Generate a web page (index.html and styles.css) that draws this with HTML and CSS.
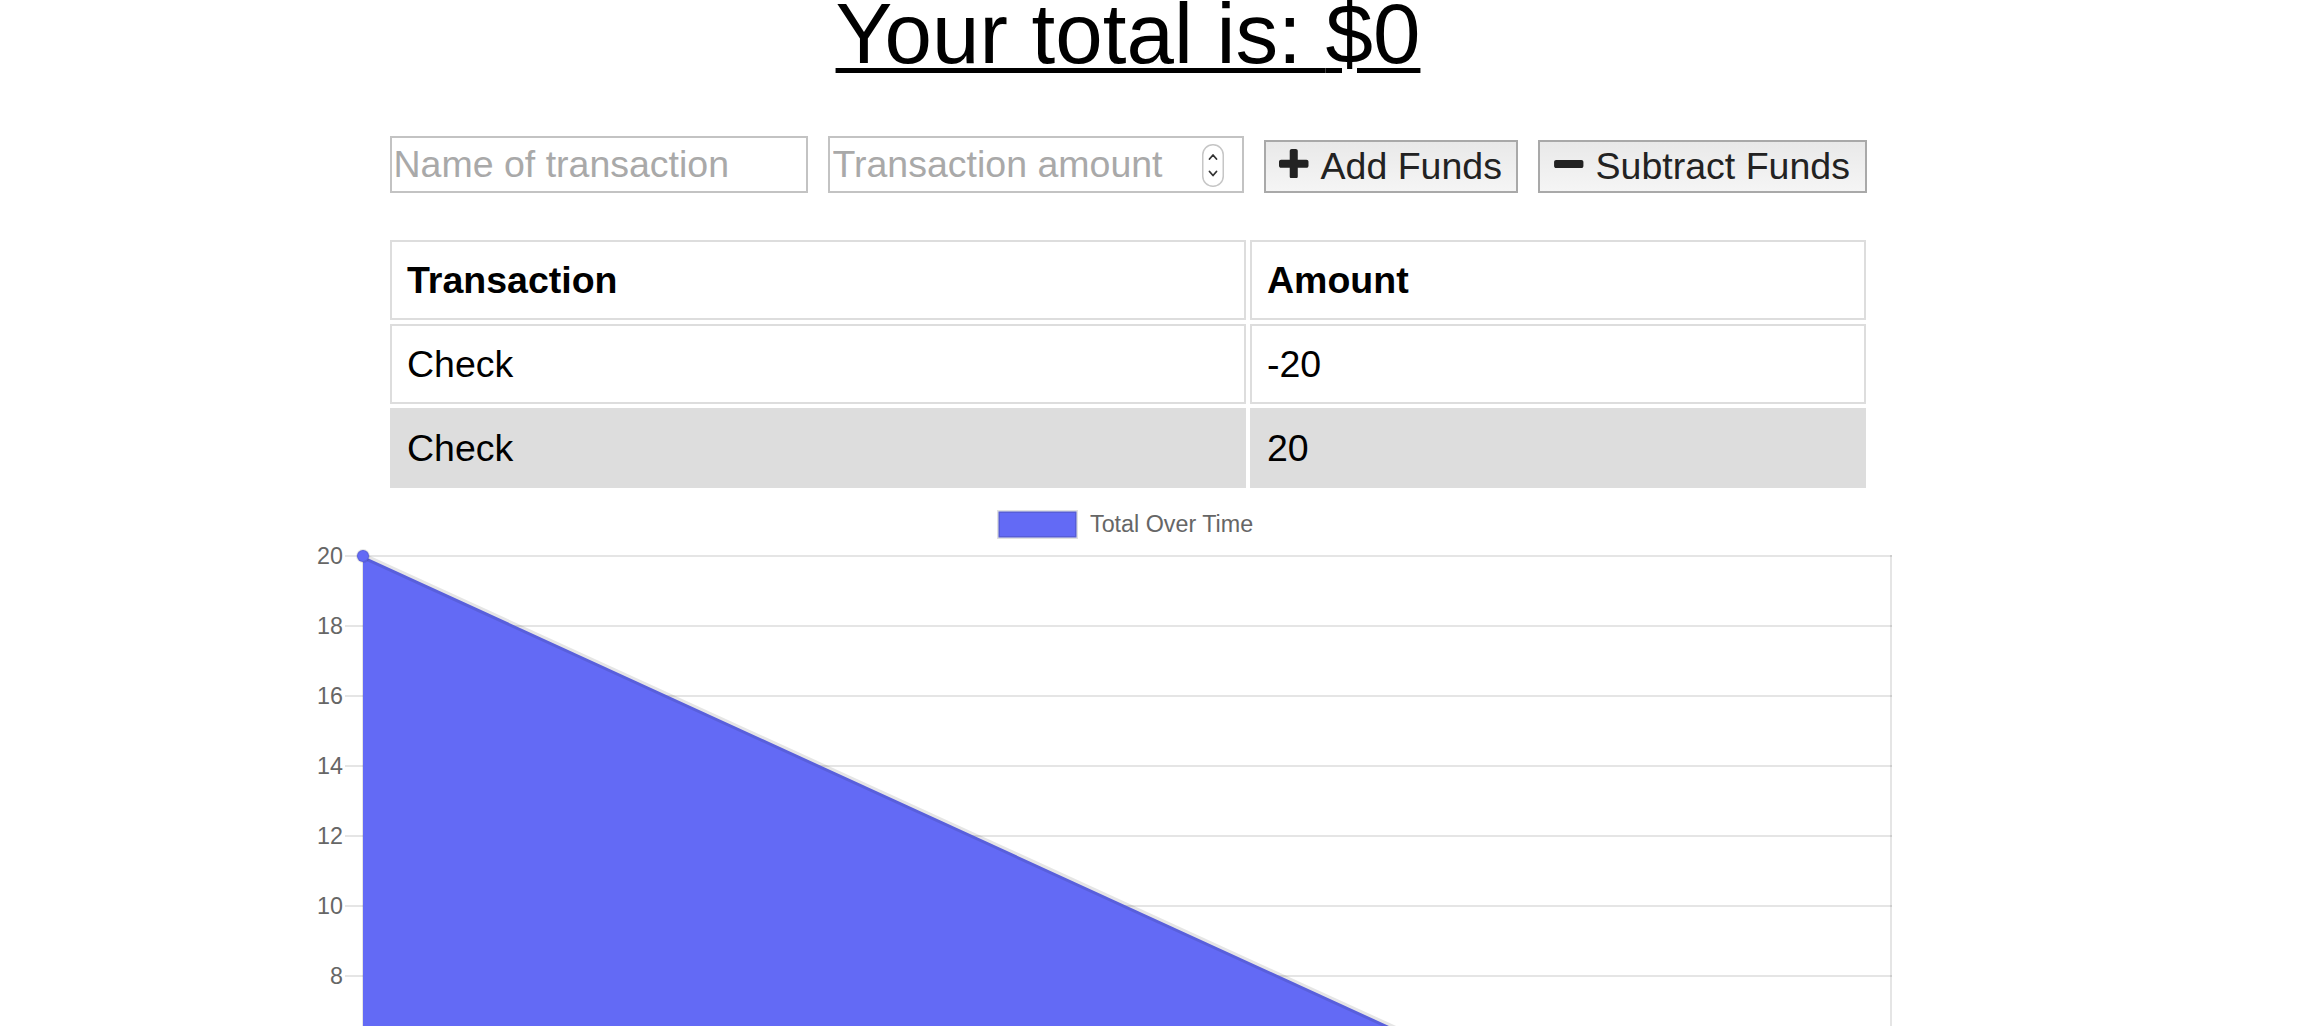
FILE: index.html
```html
<!DOCTYPE html>
<html lang="en">
<head>
<meta charset="utf-8">
<title>Budget Tracker</title>
<link rel="stylesheet" href="styles.css">
</head>
<body>
<div class="page">
  <h1 class="total">Your total is: <span class="total-value">$0</span></h1>

  <div class="form-row">
    <input class="field field-name" type="text" placeholder="Name of transaction">
    <div class="field field-amount">
      <input type="text" placeholder="Transaction amount">
      <span class="spinner">
        <svg width="22" height="43" viewBox="0 0 22 43">
          <rect x="0.75" y="0.75" width="20.5" height="41.5" rx="10" ry="10" fill="#fff" stroke="#c6c6c6" stroke-width="1.5"/>
          <path d="M7.5 15 L11 11 L14.5 15" fill="none" stroke="#333" stroke-width="1.8" stroke-linecap="round" stroke-linejoin="round"/>
          <path d="M7.5 27.5 L11 31.5 L14.5 27.5" fill="none" stroke="#333" stroke-width="1.8" stroke-linecap="round" stroke-linejoin="round"/>
        </svg>
      </span>
    </div>
    <button class="btn btn-add" type="button">
      <svg class="icon icon-plus" viewBox="0 192 1408 1408"><path d="M1408 800v192q0 40-28 68t-68 28h-416v416q0 40-28 68t-68 28h-192q-40 0-68-28t-28-68v-416h-416q-40 0-68-28t-28-68v-192q0-40 28-68t68-28h416v-416q0-40 28-68t68-28h192q40 0 68 28t28 68v416h416q40 0 68 28t28 68z"/></svg>
      <span>Add Funds</span>
    </button>
    <button class="btn btn-sub" type="button">
      <svg class="icon icon-minus" viewBox="0 704 1408 384"><path d="M1408 800v192q0 40-28 68t-68 28h-1216q-40 0-68-28t-28-68v-192q0-40 28-68t68-28h1216q40 0 68 28t28 68z"/></svg>
      <span>Subtract Funds</span>
    </button>
  </div>

  <table class="ledger">
    <thead>
      <tr><th class="col-name">Transaction</th><th class="col-amt">Amount</th></tr>
    </thead>
    <tbody>
      <tr><td>Check</td><td>-20</td></tr>
      <tr class="alt"><td>Check</td><td>20</td></tr>
    </tbody>
  </table>

  <div class="chart">
    <svg width="1656" height="534" viewBox="0 0 1656 534">
      <rect x="698.5" y="19.5" width="78" height="26" fill="#636af5" stroke="rgba(0,0,0,0.12)" stroke-width="3"/>
      <text class="chart-text" x="790" y="40">Total Over Time</text>

      <g stroke="rgba(0,0,0,0.1)" stroke-width="2">
        <line x1="45" y1="64" x2="1592" y2="64"/>
        <line x1="45" y1="134" x2="1592" y2="134"/>
        <line x1="45" y1="204" x2="1592" y2="204"/>
        <line x1="45" y1="274" x2="1592" y2="274"/>
        <line x1="45" y1="344" x2="1592" y2="344"/>
        <line x1="45" y1="414" x2="1592" y2="414"/>
        <line x1="45" y1="484" x2="1592" y2="484"/>
        <line x1="63" y1="63" x2="63" y2="534"/>
        <line x1="1591" y1="63" x2="1591" y2="534"/>
      </g>

      <g class="chart-text" text-anchor="end">
        <text x="43" y="72">20</text>
        <text x="43" y="142">18</text>
        <text x="43" y="212">16</text>
        <text x="43" y="282">14</text>
        <text x="43" y="352">12</text>
        <text x="43" y="422">10</text>
        <text x="43" y="492">8</text>
      </g>

      <polygon points="63,64 1591,764 63,764" fill="#636af5"/>
      <line x1="63" y1="64" x2="1591" y2="764" stroke="rgba(0,0,0,0.1)" stroke-width="6"/>
      <circle cx="63" cy="64" r="6" fill="#636af5" stroke="rgba(0,0,0,0.1)" stroke-width="2"/>
    </svg>
  </div>
</div>
</body>
</html>
```

FILE: styles.css
```css
html, body {
  margin: 0;
  padding: 0;
  background: #ffffff;
  overflow: hidden;
}

body {
  font-family: "Liberation Sans", Arial, Helvetica, sans-serif;
  color: #000000;
}

.page {
  width: 2256px;
  display: flex;
  flex-direction: column;
  align-items: center;
}

.total {
  margin: 0;
  font-size: 85.3px;
  font-weight: 400;
  line-height: 67px;
  white-space: nowrap;
  text-decoration: underline;
  text-decoration-thickness: 5px;
  text-underline-offset: 5px;
}

.form-row {
  display: flex;
  align-items: flex-end;
  gap: 20px;
  margin-top: 69px;
}

.field {
  box-sizing: border-box;
  height: 57px;
  margin: 0;
  border: 2px solid #c3c3c3;
  border-radius: 0;
  background: #ffffff;
  font: 37.5px "Liberation Sans", Arial, Helvetica, sans-serif;
  color: #000000;
}

.field-name {
  width: 418px;
  padding: 0 2px;
  outline: none;
}

.field-amount {
  width: 416px;
  display: flex;
  align-items: center;
  padding: 0 18px 0 3px;
}

.field-amount input {
  flex: 1;
  min-width: 0;
  height: 100%;
  border: 0;
  padding: 0;
  margin: 0;
  font: inherit;
  color: inherit;
  background: transparent;
  outline: none;
}

::placeholder {
  color: #a9a9a9;
  opacity: 1;
}

.spinner {
  display: flex;
  margin-top: 2px;
}

.spinner svg {
  display: block;
}

.btn {
  box-sizing: border-box;
  height: 53px;
  margin: 0;
  padding: 0;
  border: 2px solid #a9a9a9;
  border-radius: 0;
  background: linear-gradient(#e9e9e9, #f5f5f5);
  display: flex;
  align-items: center;
  justify-content: center;
  gap: 12px;
  font: 37.5px "Liberation Sans", Arial, Helvetica, sans-serif;
  color: #222222;
}

.btn-add {
  width: 254px;
}

.btn-sub {
  width: 329px;
}

.icon {
  display: block;
  fill: #222222;
  margin-bottom: 6px;
}

.icon-plus {
  width: 29.5px;
  height: 29.5px;
}

.icon-minus {
  width: 29.5px;
  height: 8px;
}

.ledger {
  margin-top: 43px;
  width: 1484px;
  table-layout: fixed;
  border-collapse: separate;
  border-spacing: 4px;
  font-size: 37.5px;
}

.ledger th,
.ledger td {
  box-sizing: border-box;
  padding: 0 15px;
  border: 2px solid #dddddd;
  line-height: 76px;
  text-align: left;
  white-space: nowrap;
}

.ledger th {
  font-weight: 700;
}

.ledger .col-name {
  width: 856px;
}

.ledger .col-amt {
  width: 616px;
}

.ledger tr.alt td {
  background: #dddddd;
}

.chart {
  width: 1656px;
  height: 534px;
}

.chart svg {
  display: block;
}

.chart-text {
  font-family: "Liberation Sans", Arial, Helvetica, sans-serif;
  font-size: 23.3px;
  fill: #666666;
}
```
